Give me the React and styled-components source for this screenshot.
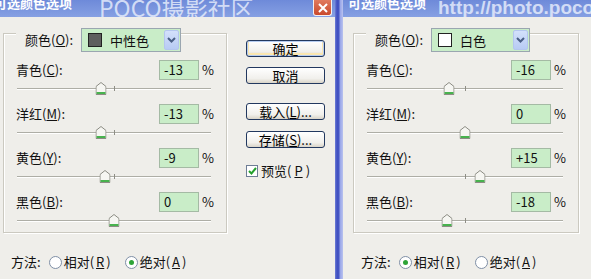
import React from 'react'
import styled, { createGlobalStyle } from 'styled-components'

const channels = [
  { name: '青色', key: 'C' },
  { name: '洋红', key: 'M' },
  { name: '黄色', key: 'Y' },
  { name: '黑色', key: 'B' },
]

const dialogs = [
  { colorName: '中性色', swatch: '#5e5e5e', values: [-13, -13, -9, 0], method: 'abs', watermark: 'POCO摄影社区', buttons: true },
  { colorName: '白色', swatch: '#ffffff', values: [-16, 0, 15, -18], method: 'rel', watermark: 'http://photo.poco', buttons: false },
]

const fmt = (v) => (v > 0 ? `+${v}` : `${v}`)

function Thumb() {
  return (
    <svg width="11" height="13" viewBox="0 0 11 13">
      <path d="M0.5 4.5 L5.5 0.5 L10.5 4.5 L10.5 12.5 L0.5 12.5 Z" fill="#f6f6f2" stroke="#8c8c84" />
      <rect x="1" y="10" width="9" height="2" fill="#48b24e" />
    </svg>
  )
}

function ChannelRow({ channel, value }) {
  return (
    <Row>
      <RowTop>
        <Label>{channel.name}(<u>{channel.key}</u>):</Label>
        <ValueBox>{fmt(value)}</ValueBox>
        <Percent>%</Percent>
      </RowTop>
      <Slider>
        <Track />
        <Tick />
        <ThumbHolder style={{ left: `${50 + value / 2}%` }}>
          <Thumb />
        </ThumbHolder>
      </Slider>
    </Row>
  )
}

function Dialog({ data, first }) {
  return (
    <DialogBox $width={first ? 335 : null}>
      <TitleBar>
        <Title $shift={first ? -6 : 5}>可选颜色选项</Title>
        <Watermark $url={!first}>{data.watermark}</Watermark>
        {first && (
          <Close>
            <svg width="10" height="10" viewBox="0 0 10 10">
              <path d="M1 1 L9 9 M9 1 L1 9" stroke="#fff" strokeWidth="2" />
            </svg>
          </Close>
        )}
      </TitleBar>
      <Body $pad={first ? 3 : 10}>
        <Column>
          <Group $width={first ? 224 : 226}>
            <GroupHeader>
              <Label>颜色(<u>O</u>):</Label>
              <Combo $width={first ? 100 : 99}>
                <Swatch $color={data.swatch} />
                <ComboText>{data.colorName}</ComboText>
                <DropButton>
                  <svg width="9" height="6" viewBox="0 0 9 6">
                    <path d="M1 1 L4.5 4.5 L8 1" stroke="#4a5f86" strokeWidth="2" fill="none" />
                  </svg>
                </DropButton>
              </Combo>
            </GroupHeader>
            <Rows>
              {channels.map((c, i) => (
                <ChannelRow key={c.key} channel={c} value={data.values[i]} />
              ))}
            </Rows>
          </Group>
          <MethodRow>
            <span>方法:</span>
            <RadioItem>
              <Radio $checked={data.method === 'rel'} />
              相对(<u>R</u>)
            </RadioItem>
            <RadioItem>
              <Radio $checked={data.method === 'abs'} />
              绝对(<u>A</u>)
            </RadioItem>
          </MethodRow>
        </Column>
        {data.buttons && (
          <ButtonColumn>
            <Button $default>确定</Button>
            <Button $gap={10}>取消</Button>
            <Button $gap={19}>载入(<u>L</u>)...</Button>
            <Button $gap={11}>存储(<u>S</u>)...</Button>
            <CheckRow>
              <CheckBox>
                <svg width="9" height="8" viewBox="0 0 9 8">
                  <path d="M1 4 L3.5 6.5 L8 1" stroke="#22a02c" strokeWidth="2" fill="none" />
                </svg>
              </CheckBox>
              预览(<u>P</u>)
            </CheckRow>
          </ButtonColumn>
        )}
      </Body>
    </DialogBox>
  )
}

export default function App() {
  return (
    <>
      <GlobalStyle />
      <Screen>
        <Dialog data={dialogs[0]} first />
        <Divider />
        <Dialog data={dialogs[1]} />
      </Screen>
    </>
  )
}

const GlobalStyle = createGlobalStyle`
  html, body {
    margin: 0;
    padding: 0;
  }
  body {
    background: #efeeea;
    font-family: "Noto Sans CJK SC", "Liberation Sans", sans-serif;
    font-size: 13px;
    color: #111;
  }
  u {
    text-decoration: underline;
    text-underline-offset: 1px;
  }
`

const Screen = styled.div`
  display: flex;
  width: 591px;
  height: 279px;
  overflow: hidden;
`

const DialogBox = styled.div`
  display: flex;
  flex-direction: column;
  width: ${(p) => (p.$width ? `${p.$width}px` : 'auto')};
  flex: ${(p) => (p.$width ? 'none' : '1')};
  background: #efeeea;
  overflow: hidden;
`

const Divider = styled.div`
  width: 8px;
  flex: none;
  background: linear-gradient(to right, #6f7fd6 0, #3f4fc0 2px, #4656c4 4px, #97a4e8 5px, #b9c2ef 8px);
`

const TitleBar = styled.div`
  height: 17px;
  display: flex;
  align-items: flex-start;
  overflow: hidden;
  background: linear-gradient(#6e8ad9, #86a0e3);
`

const Title = styled.span`
  margin-left: ${(p) => p.$shift}px;
  margin-top: -4px;
  font-size: 13px;
  font-weight: bold;
  line-height: 13px;
  color: #fff;
  white-space: nowrap;
`

const Watermark = styled.span`
  margin-left: ${(p) => (p.$url ? 12 : 27)}px;
  margin-top: -3px;
  font-family: ${(p) => (p.$url ? '"Liberation Sans", sans-serif' : '"Noto Sans CJK SC", sans-serif')};
  font-size: ${(p) => (p.$url ? 19 : 23)}px;
  font-weight: ${(p) => (p.$url ? 'bold' : 'normal')};
  line-height: 21px;
  color: rgba(232, 238, 252, 0.82);
  white-space: nowrap;
`

const Close = styled.div`
  margin-left: auto;
  margin-right: 3px;
  width: 19px;
  height: 16px;
  box-sizing: border-box;
  border: 1px solid #f4f0f0;
  border-top: none;
  border-radius: 0 0 3px 3px;
  background: linear-gradient(#e07a5e, #c9492c);
  display: flex;
  align-items: center;
  justify-content: center;
  flex: none;
`

const Body = styled.div`
  flex: 1;
  display: flex;
  padding-left: ${(p) => p.$pad}px;
`

const Column = styled.div`
  display: flex;
  flex-direction: column;
  padding-top: 16px;
`

const Group = styled.div`
  width: ${(p) => p.$width}px;
  height: 200px;
  box-sizing: border-box;
  border: 1px solid #cbc9c0;
  box-shadow: inset 1px 1px 0 #fff, 1px 1px 0 #fff;
  display: flex;
  flex-direction: column;
`

const GroupHeader = styled.div`
  align-self: flex-start;
  display: flex;
  align-items: center;
  gap: 8px;
  height: 24px;
  margin: -6px 0 0 12px;
  padding-left: 9px;
  background: #efeeea;
`

const Label = styled.span`
  font-size: 13px;
  line-height: 18px;
  white-space: nowrap;
`

const Combo = styled.div`
  width: ${(p) => p.$width}px;
  height: 24px;
  box-sizing: border-box;
  border: 1px solid #9aa6b0;
  background: #c9edc8;
  display: flex;
  align-items: center;
  padding-left: 6px;
`

const Swatch = styled.span`
  width: 12px;
  height: 12px;
  border: 1px solid #222;
  background: ${(p) => p.$color};
  flex: none;
`

const ComboText = styled.span`
  margin-left: 8px;
  font-size: 13px;
  flex: 1;
`

const DropButton = styled.span`
  width: 15px;
  height: 20px;
  margin-right: 1px;
  box-sizing: border-box;
  border: 1px solid #b4c6ee;
  border-radius: 2px;
  background: linear-gradient(#d3e0fb, #b8cbf4);
  display: flex;
  align-items: center;
  justify-content: center;
`

const Rows = styled.div`
  display: flex;
  flex-direction: column;
  gap: 6px;
  padding-top: 8px;
`

const Row = styled.div`
  display: flex;
  flex-direction: column;
`

const RowTop = styled.div`
  display: grid;
  grid-template-columns: 1fr 40px 12px;
  column-gap: 3px;
  align-items: center;
  padding: 0 12px 0 12px;
  height: 20px;
`

const ValueBox = styled.div`
  height: 20px;
  box-sizing: border-box;
  border: 1px solid #a4baa4;
  background: #c9edc8;
  padding-left: 4px;
  font-size: 13px;
  line-height: 18px;
`

const Percent = styled.span`
  font-size: 13px;
  line-height: 18px;
`

const Slider = styled.div`
  position: relative;
  height: 18px;
  margin: 0 15px 0 13px;
`

const Track = styled.div`
  margin-top: 8px;
  height: 1px;
  background: #aeaea6;
  border-bottom: 1px solid #fff;
`

const Tick = styled.div`
  position: absolute;
  left: 50%;
  top: 6px;
  width: 1px;
  height: 5px;
  background: #8e8e86;
`

const ThumbHolder = styled.div`
  position: absolute;
  top: 2px;
  width: 11px;
  height: 13px;
  transform: translateX(-50%);
  line-height: 0;
`

const MethodRow = styled.div`
  display: flex;
  align-items: center;
  gap: 8px;
  margin: 20px 0 0 8px;
  font-size: 13px;
  line-height: 18px;
  white-space: nowrap;
`

const RadioItem = styled.span`
  display: flex;
  align-items: center;
  gap: 2px;
  margin-right: 6px;
`

const Radio = styled.span`
  width: 11px;
  height: 11px;
  border-radius: 50%;
  border: 1px solid #7f8fa6;
  background: #fff;
  display: flex;
  align-items: center;
  justify-content: center;

  &::after {
    content: '';
    width: 5px;
    height: 5px;
    border-radius: 50%;
    background: ${(p) => (p.$checked ? '#2ea437' : 'transparent')};
  }
`

const ButtonColumn = styled.div`
  display: flex;
  flex-direction: column;
  align-items: flex-start;
  padding-top: 23px;
  margin-left: 19px;
`

const Button = styled.button`
  width: 79px;
  height: 17px;
  margin-top: ${(p) => p.$gap || 0}px;
  padding: 0;
  box-sizing: border-box;
  border: 1px solid #22385f;
  border-radius: 3px;
  background: linear-gradient(#ffffff, #f1f0ec 70%, #d9d4c8);
  box-shadow: ${(p) => (p.$default ? 'inset 0 0 0 1px #b6cdf1, inset 0 -1px 0 2px #fbe7b0' : 'none')};
  font-family: "Noto Sans CJK SC", sans-serif;
  font-size: 13px;
  line-height: 14px;
  color: #000;
`

const CheckRow = styled.div`
  display: flex;
  align-items: center;
  gap: 3px;
  margin-top: 16px;
  font-size: 13px;
  line-height: 14px;
  white-space: nowrap;
`

const CheckBox = styled.span`
  width: 12px;
  height: 12px;
  box-sizing: border-box;
  border: 1px solid #6e7d95;
  background: #fff;
  display: flex;
  align-items: center;
  justify-content: center;
`
